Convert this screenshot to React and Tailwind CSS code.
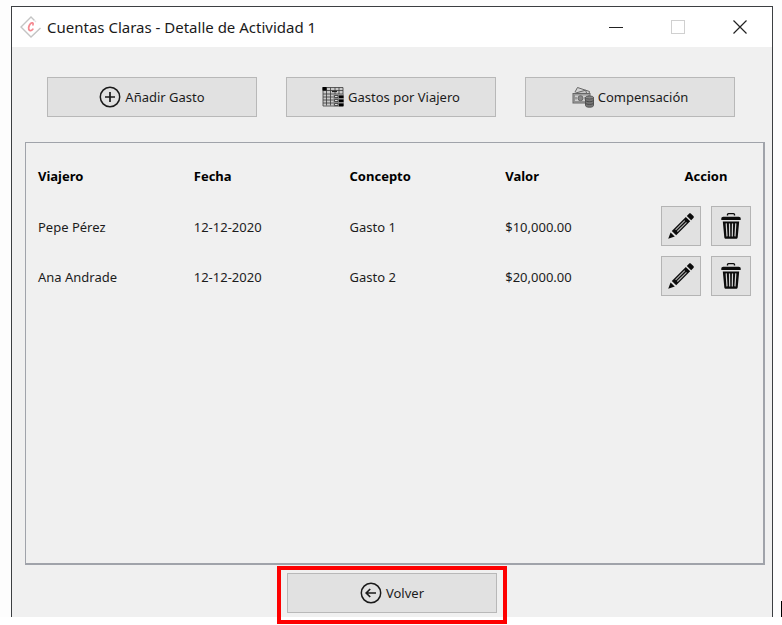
import React from "react";

const expenses = [
  { traveler: "Pepe Pérez", date: "12-12-2020", concept: "Gasto 1", value: "$10,000.00" },
  { traveler: "Ana Andrade", date: "12-12-2020", concept: "Gasto 2", value: "$20,000.00" },
];

function LogoIcon() {
  return (
    <svg width="22" height="22" viewBox="0 0 22 22" fill="none" aria-hidden="true">
      <path d="M14.500 4.500 11 1 1 11l10 10 9.500-9" stroke="#c4c4c4" strokeWidth="1.400" />
      <path d="M14 4l2 2" stroke="#e4e4e4" strokeWidth="1.200" />
      <path
        d="M13 8.800c.6-2-1.100-2.600-2.500-1.200-1.900 1.900-2.700 5.900-.8 6.800 1.200.5 2.300-.1 3.100-1.100"
        stroke="#f58a92"
        strokeWidth="1.800"
        strokeLinecap="round"
      />
    </svg>
  );
}

function PlusCircleIcon() {
  return (
    <svg width="22" height="22" viewBox="0 0 22 22" fill="none" stroke="#1a1a1a" strokeWidth="1.5" aria-hidden="true">
      <circle cx="11" cy="11" r="9.700" />
      <path d="M11 6v10M6 11h10" strokeWidth="1.700" />
    </svg>
  );
}

function BackCircleIcon() {
  return (
    <svg width="22" height="22" viewBox="0 0 22 22" fill="none" stroke="#1a1a1a" strokeWidth="1.5" aria-hidden="true">
      <circle cx="11" cy="11" r="9.700" />
      <path d="M16 11H6.500M10.200 7 6.200 11l4 4" strokeWidth="1.700" />
    </svg>
  );
}

function SheetIcon() {
  return (
    <svg width="22" height="22" viewBox="0 0 22 22" fill="none" aria-hidden="true">
      <rect x="1" y="1.500" width="20" height="18" fill="#c9c9c9" />
      <path
        d="M1 1.500h20v18.500H1zM1 4.500h20M1 8h20M1 11h11M1 14h11M1 17h11M4.500 1.500v18M8.500 1.500v18M13 1.500v7M17 1.500v7"
        stroke="#3a3a3a"
        strokeWidth="0.800"
      />
      <rect x="0.500" y="1" width="4" height="3.500" fill="#000" />
      <path d="M10 5.500h5" stroke="#222" strokeWidth="1.200" />
      <rect x="11.500" y="8" width="10" height="12.500" fill="#8a8a8a" />
      <path d="M12.500 9.500h3.500v2h-3.500zM12.500 13.500h3.500v2h-3.500zM12.500 17.500h3.500v2h-3.500z" fill="#ddd" stroke="#333" strokeWidth="0.800" />
      <path d="M17 9.500h4.500v2.400H17zM17 13.500h4.500v2.400H17zM17 17.500h4.500v2.700H17z" fill="#000" />
    </svg>
  );
}

function MoneyIcon() {
  return (
    <svg width="22" height="22" viewBox="0 0 22 22" fill="none" stroke="#666" strokeWidth="1" aria-hidden="true">
      <path d="M3 6 5.500 1.500 17.500 5.500 17 8" fill="#d4d4d4" />
      <path d="M2 7.500 13.500 4.200 15 8" fill="#c4c4c4" />
      <rect x="1" y="7.500" width="17" height="9.500" fill="#a9a9a9" />
      <rect x="2.500" y="9" width="14" height="6.500" fill="#d0d0d0" stroke="#888" strokeWidth="0.800" />
      <circle cx="8.500" cy="12.200" r="2.500" fill="#888" />
      <path d="M4 11v2.500M13 11v2.500" />
      <path d="M13.500 11.500v8c0 2.300 8 2.300 8 0v-8z" fill="#777" stroke="#555" />
      <ellipse cx="17.500" cy="11.500" rx="4" ry="1.500" fill="#888" stroke="#555" />
      <path d="M13.500 14.200c0 2 8 2 8 0M13.500 16.900c0 2 8 2 8 0" stroke="#4a4a4a" />
    </svg>
  );
}

function PencilIcon() {
  return (
    <svg width="28" height="28" viewBox="0 0 28 28" aria-hidden="true">
      <path d="M19.800 3.900 22 1.700c.6-.6 1.400-.6 2 0l2.400 2.400c.6.6.6 1.400 0 2L24.200 8.300z" fill="#0c0c0c" />
      <path d="M18.800 4.900 23.200 9.300 9.200 23.300 4.800 18.900z" fill="#0c0c0c" />
      <path d="M17.800 8.600 8.600 17.800M19.500 10.300 10.300 19.500" stroke="#b4b4b4" strokeWidth="1.100" />
      <path d="M3.600 20.400 7.800 24.600 1.200 26.800z" fill="#0c0c0c" />
    </svg>
  );
}

function TrashIcon() {
  return (
    <svg width="22" height="28" viewBox="0 0 22 28" aria-hidden="true">
      <path d="M7.500 3.400V2.600c0-.6.400-1 1-1h5c.6 0 1 .4 1 1v.8" fill="none" stroke="#0c0c0c" strokeWidth="1.400" />
      <path d="M1.300 8V6.700C1.300 5.500 2.200 4.800 3.300 4.800h15.400c1.100 0 2 .7 2 1.900V8z" fill="#0c0c0c" />
      <path d="M2.800 9.500h16.400l-1.500 15.700c-.1.900-.8 1.600-1.700 1.600H6c-.9 0-1.600-.7-1.700-1.600z" fill="#0c0c0c" />
      <path d="M6.200 11.400l.8 13M9.500 11.400l.2 13M12.500 11.400l-.2 13M15.800 11.400l-.8 13" stroke="#d4d4d4" strokeWidth="1.200" />
    </svg>
  );
}

function ActionButton({ icon, children }) {
  return (
    <button
      type="button"
      className="flex h-10 w-[210px] items-center justify-center gap-1 border border-[#b8b8b8] bg-[#e1e1e1] text-[#1c1c1c]"
    >
      {icon}
      <span className="pt-0.5">{children}</span>
    </button>
  );
}

function IconButton({ label, children }) {
  return (
    <button
      type="button"
      aria-label={label}
      className="flex size-10 items-center justify-center border border-[#b4b4b4] bg-[#e1e1e1]"
    >
      {children}
    </button>
  );
}

function TitleBar() {
  return (
    <header className="flex h-10 shrink-0 items-center bg-white pr-[25px] pl-2">
      <LogoIcon />
      <h1 className="ml-[5px] flex-1 text-[15px] text-[#1a1a1a]">
        Cuentas Claras - Detalle de Actividad 1
      </h1>
      <div className="flex items-center gap-12">
        <button type="button" aria-label="Minimizar" className="flex size-[14px] items-center">
          <span className="h-px w-full bg-[#222]" />
        </button>
        <button type="button" aria-label="Maximizar" disabled className="size-[14px] border border-[#d0d0d0]" />
        <button type="button" aria-label="Cerrar" className="size-[14px]">
          <svg width="14" height="14" viewBox="0 0 14 14" stroke="#222" strokeWidth="1.200" aria-hidden="true">
            <path d="M.5.5l13 13M13.500.5l-13 13" />
          </svg>
        </button>
      </div>
    </header>
  );
}

export default function App() {
  return (
    <div className="flex min-h-screen flex-col bg-white pb-2 font-['Noto_Sans',sans-serif] text-[13px]">
      <div className="relative flex flex-1 flex-col bg-[#fdfdfd] pt-[6px] pr-[9px] pl-[11px]">
        <div className="flex flex-1 flex-col border border-b-0 border-[#3c3f42] bg-[#f0f0f0]">
          <TitleBar />
          <main className="flex flex-1 flex-col pb-1">
            <nav className="flex justify-between pt-[30px] pr-[37px] pb-[25px] pl-[35px]">
              <ActionButton icon={<PlusCircleIcon />}>Añadir Gasto</ActionButton>
              <ActionButton icon={<SheetIcon />}>Gastos por Viajero</ActionButton>
              <ActionButton icon={<MoneyIcon />}>Compensación</ActionButton>
            </nav>

            <section className="mr-[7px] ml-[13px] flex-1 border border-r-2 border-b-2 border-[#a0a3aa] px-3 py-2">
              <table className="w-full table-fixed text-left text-[#1c1c1c]">
                <thead>
                  <tr className="h-[50px] text-black">
                    <th scope="col" className="pt-0.5">Viajero</th>
                    <th scope="col" className="pt-0.5">Fecha</th>
                    <th scope="col" className="pt-0.5">Concepto</th>
                    <th scope="col" className="pt-0.5">Valor</th>
                    <th scope="col" className="w-[90px] pt-0.5 text-center">Accion</th>
                  </tr>
                </thead>
                <tbody>
                  {expenses.map((item) => (
                    <tr key={item.traveler} className="h-[50px]">
                      <td className="pt-1">{item.traveler}</td>
                      <td className="pt-1">{item.date}</td>
                      <td className="pt-1">{item.concept}</td>
                      <td className="pt-1">{item.value}</td>
                      <td>
                        <div className="flex gap-[10px]">
                          <IconButton label={`Editar ${item.concept}`}>
                            <PencilIcon />
                          </IconButton>
                          <IconButton label={`Eliminar ${item.concept}`}>
                            <TrashIcon />
                          </IconButton>
                        </div>
                      </td>
                    </tr>
                  ))}
                </tbody>
              </table>
            </section>

            <div className="flex justify-center pt-2">
              <div className="relative">
                <ActionButton icon={<BackCircleIcon />}>Volver</ActionButton>
                <div className="pointer-events-none absolute -inset-x-[10px] -top-[7px] -bottom-[11px] border-4 border-[#fe0000]" />
              </div>
            </div>
          </main>
        </div>
        <div className="absolute right-0 bottom-0 h-4 w-px bg-black" />
      </div>
    </div>
  );
}
